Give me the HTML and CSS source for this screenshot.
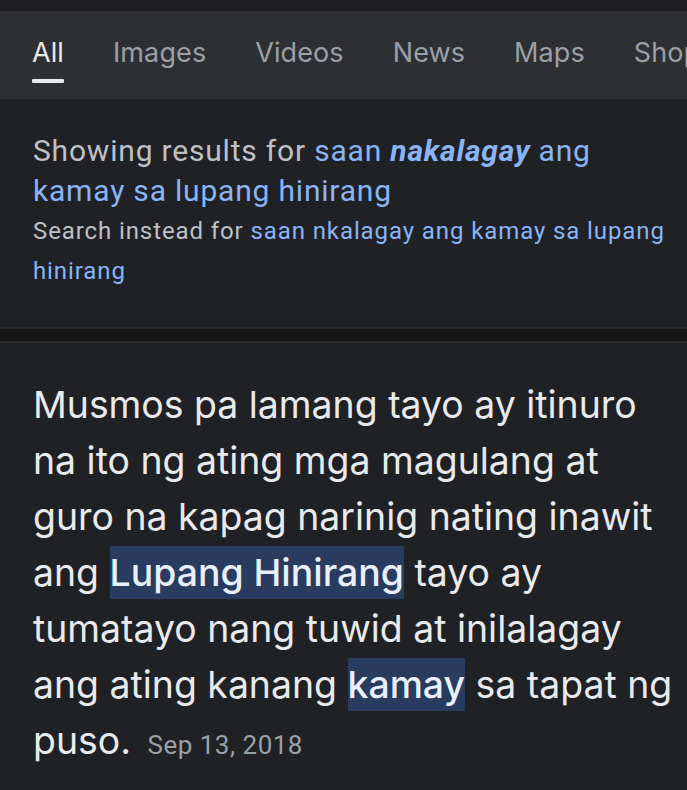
FILE: index.html
```html
<!DOCTYPE html>
<html>
<head>
<meta charset="utf-8">
<link rel="stylesheet" href="styles.css">
</head>
<body>
<div class="top"></div>
<nav class="tabs">
  <div class="tab active">All</div>
  <div class="tab">Images</div>
  <div class="tab">Videos</div>
  <div class="tab">News</div>
  <div class="tab">Maps</div>
  <div class="tab">Shopping</div>
</nav>
<section class="card spell">
  <p class="showing">Showing results for <a class="lnk">saan <b><i>nakalagay</i></b> ang kamay sa lupang hinirang</a></p>
  <p class="instead">Search instead for <a class="lnk">saan nkalagay ang kamay sa lupang hinirang</a></p>
</section>
<div class="sep"></div>
<section class="card snippet">
  <p class="text">Musmos pa lamang tayo ay itinuro na ito ng ating mga magulang at guro na kapag narinig nating inawit ang <span class="hl">Lupang Hinirang</span> tayo ay tumatayo nang tuwid at inilalagay ang ating kanang <span class="hl">kamay</span> sa tapat ng puso. <span class="date">Sep 13, 2018</span></p>
</section>
</body>
</html>
```
FILE: styles.css
```css
html, body {
  margin: 0;
  padding: 0;
  background: #202124;
  overflow: hidden;
}
body {
  width: 687px;
  height: 790px;
}
.top {
  height: 11px;
  background: #1f1f21;
}
.tabs {
  height: 88px;
  background: #2e2f32;
  display: flex;
  gap: 49px;
  padding-left: 32px;
  white-space: nowrap;
  overflow: hidden;
  font-family: "Inter", "Open Sans", sans-serif;
  font-size: 27px;
  letter-spacing: 0.1px;
  color: #9aa0a6;
}
.tab {
  position: relative;
  padding-top: 24px;
  line-height: 36px;
}
.tab.active {
  color: #e8eaed;
}
.tab.active::after {
  content: "";
  position: absolute;
  left: 0;
  right: 0;
  top: 68px;
  height: 4px;
  background: #e8eaed;
  border-radius: 1px;
}
.card {
  background: #202124;
}
.spell {
  height: 230px;
  box-sizing: border-box;
  padding: 32px 10px 0 33px;
  font-family: "Roboto", sans-serif;
  border-bottom: 2px solid #2a2b2e;
}
.spell p {
  margin: 0;
}
.showing {
  font-size: 30px;
  letter-spacing: 0.8px;
  line-height: 40px;
  color: #bdc1c6;
}
.instead {
  font-size: 24px;
  letter-spacing: 0.9px;
  line-height: 40px;
  color: #bdc1c6;
}
.lnk {
  color: #8ab4f8;
}
.lnk b {
  font-weight: 700;
}
.sep {
  height: 12px;
  background: #171717;
  border-bottom: 2px solid #2a2b2e;
}
.snippet {
  padding: 34px 2px 0 33px;
}
.text {
  margin: 0;
  font-family: "Inter", "Open Sans", sans-serif;
  font-size: 37.4px;
  letter-spacing: 0;
  line-height: 56px;
  color: #e8eaed;
}
.hl {
  background: #293b5e;
  color: #e8f0fe;
  font-weight: 500;
  padding: 4px 0;
}
.date {
  font-family: "Roboto", sans-serif;
  font-size: 26px;
  letter-spacing: 0.5px;
  color: #9aa0a6;
  margin-left: 6px;
}
```
